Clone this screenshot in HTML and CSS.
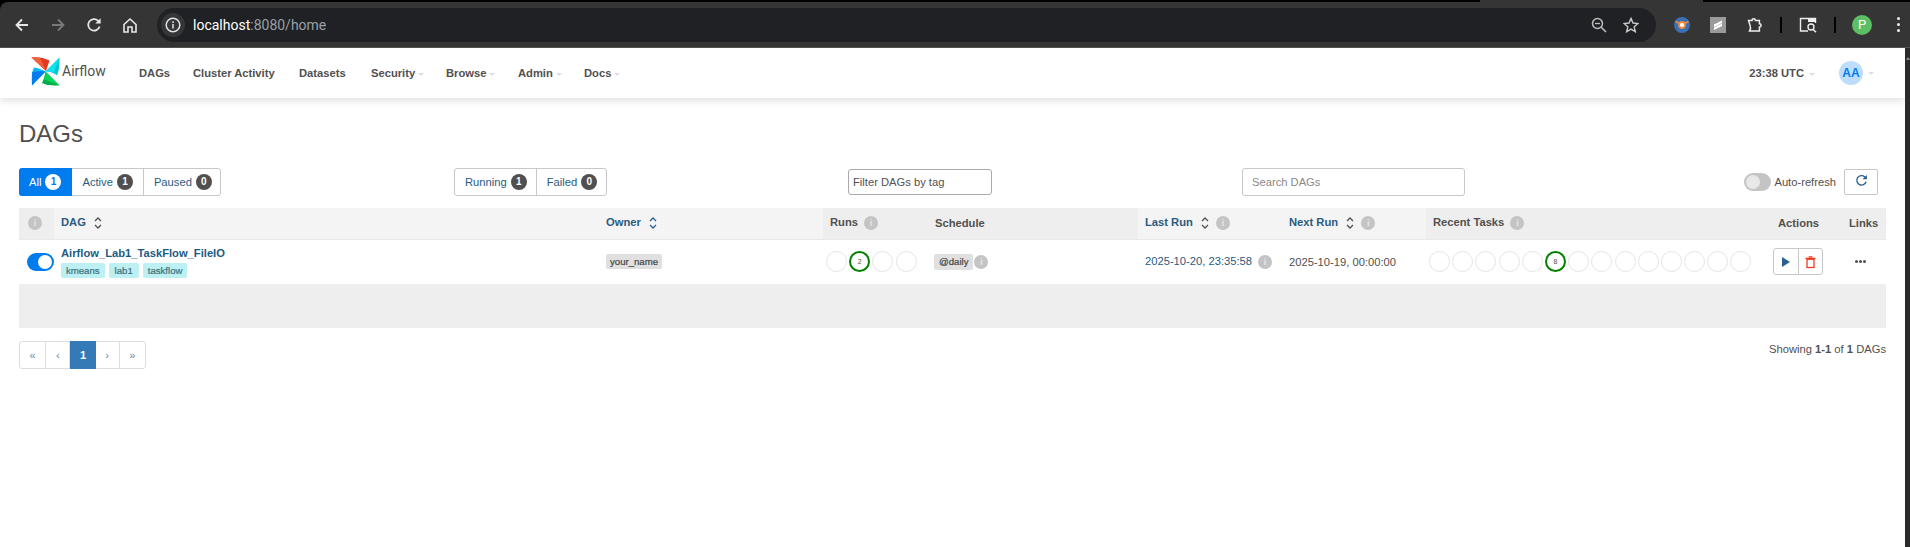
FILE: index.html
```html
<!DOCTYPE html>
<html lang="en">
<head>
    <meta charset="UTF-8">
    <meta name="viewport" content="width=device-width, initial-scale=1.0">
    <title>DAGs - Airflow</title>
    <link rel="stylesheet" href="styles.css">
</head>
<body>
    <!-- browser toolbar -->
    <div class="tab-strip"><span class="tab-edge"></span></div>
    <div class="browser-bar">
        <div class="browser-nav">
            <svg class="b-icon" viewBox="0 0 16 16"><path d="M14 8H3M8 2.500 2.500 8 8 13.500" fill="none" stroke="#e8e8e8" stroke-width="1.800"/></svg>
            <svg class="b-icon" viewBox="0 0 16 16"><path d="M2 8h11M8 2.500 13.500 8 8 13.500" fill="none" stroke="#7a7a7a" stroke-width="1.800"/></svg>
            <svg class="b-icon" viewBox="0 0 16 16"><path d="M13.600 9.500A5.800 5.800 0 1 1 12 3.600L14 5.600" fill="none" stroke="#e8e8e8" stroke-width="1.700"/><path d="M14.600 1.200v5.400H9.200z" fill="#e8e8e8"/></svg>
            <svg class="b-icon" viewBox="0 0 16 16"><path d="M2 7.500 8 2l6 5.500V15h-4V10H6v5H2z" fill="none" stroke="#e8e8e8" stroke-width="1.600"/></svg>
        </div>
        <div class="address">
            <span class="site-chip"><svg viewBox="0 0 16 16" width="16" height="16"><circle cx="8" cy="8" r="6.800" fill="none" stroke="#e3e3e3" stroke-width="1.500"/><path d="M8 7v4.500M8 4.300v1.600" stroke="#e3e3e3" stroke-width="1.500"/></svg></span>
            <span class="url">localhost<span class="url-dim">:8080/home</span></span>
            <svg class="addr-zoom" viewBox="0 0 16 16"><circle cx="6.500" cy="6.500" r="5" fill="none" stroke="#bdbdbd" stroke-width="1.500"/><path d="M10.200 10.200 15 15" stroke="#bdbdbd" stroke-width="1.600"/><path d="M4 6.500h5" stroke="#bdbdbd" stroke-width="1.300"/></svg>
            <svg class="addr-star" viewBox="0 0 16 16"><path d="M8 1.400 10 6l5 .5-3.800 3.300 1.100 4.900L8 12.100 3.700 14.700l1.100-4.900L1 6.500 6 6z" fill="none" stroke="#c8c8c8" stroke-width="1.400"/></svg>
        </div>
        <div class="browser-tools">
            <svg class="ext-one" viewBox="0 0 16 16"><circle cx="8" cy="8" r="8" fill="#3a6fb5"/><path d="M1.500 4.500 5.500 6.500h5l4-2" fill="none" stroke="#f08a3c" stroke-width="1.600"/><circle cx="8" cy="8" r="3" fill="#fff" stroke="#f08a3c" stroke-width="1.800"/></svg>
            <svg class="ext-two" viewBox="0 0 16 16"><rect width="16" height="16" fill="#9a9a9a"/><path d="M4 7.500 12 3.500v2.500L4 10zM4 10.500l8-4v2.500l-8 4z" fill="#fff"/></svg>
            <svg class="ext-puzzle" viewBox="0 0 16 16"><path d="M1.500 3.500H5a1.700 1.700 0 0 1 3.400 0h4v3.200a1.700 1.700 0 0 1 0 3.400v3.900H2.600a6 6 0 0 0 .6-5.200z" fill="none" stroke="#eee" stroke-width="1.500"/></svg>
            <span class="tool-sep"></span>
            <svg class="tab-search" viewBox="0 0 18 16"><path d="M9 14H1.500V1.500H16.500V6" fill="none" stroke="#eee" stroke-width="1.400"/><rect x="9" y="1" width="8" height="4" fill="#eee"/><circle cx="12" cy="10" r="3" fill="none" stroke="#eee" stroke-width="1.400"/><path d="M14 12.200l3 3" stroke="#eee" stroke-width="1.500"/></svg>
            <span class="tool-sep sep-two"></span>
            <span class="profile">P</span>
            <span class="kebab"><i></i><i></i><i></i></span>
        </div>
    </div>

    <div class="window">
        <div class="page">
            <nav class="navbar">
                <a class="brand">
                    <svg class="logo" viewBox="0 0 29 29">
                        <path d="M.5 .5C6 -.5 13 .5 18.500 3.500L15 14z" fill="#e43921"/>
                        <path d="M.5 .5 15 14 9.500 1.200C6 .3 3 .2 .5 .5z" fill="#f0603a"/>
                        <path d="M28.500 .5C28.500 7 28.500 13 26 18.500 22 15 18 14.500 14.500 14.500z" fill="#00c7d4"/>
                        <path d="M28.500 .5 14.500 14.500C17 14.500 20 14.800 22.500 16z" fill="#11e1ee"/>
                        <path d="M28.500 28.500C21 28.500 16 28.500 11 26 13 22 14 18 14.500 14.500z" fill="#00ad46"/>
                        <path d="M28.500 28.500 14.500 14.500C14.500 17 14 20 13 22.500z" fill="#04d659"/>
                        <path d="M1 28.500C.5 21 .5 15 3 10.500 7 11 11 12.500 14.500 14.500z" fill="#0cb6ff"/>
                        <path d="M1 28.500 14.500 14.500C11 14 5 14 1.200 15z" fill="#017cee"/>
                    </svg>
                    <span class="brand-name">Airflow</span>
                </a>
                <ul class="nav-links">
                    <li>DAGs</li>
                    <li>Cluster Activity</li>
                    <li>Datasets</li>
                    <li class="has-caret">Security</li>
                    <li class="has-caret">Browse</li>
                    <li class="has-caret">Admin</li>
                    <li class="has-caret">Docs</li>
                </ul>
                <div class="nav-right">
                    <span class="clock has-caret">23:38 UTC</span>
                    <span class="user has-caret"><span class="avatar">AA</span></span>
                </div>
            </nav>

            <main class="content">
                <h2 class="page-title">DAGs</h2>

                <div class="filters">
                    <div class="btn-group status-group">
                        <a class="btn active">All <span class="count">1</span></a>
                        <a class="btn">Active <span class="count">1</span></a>
                        <a class="btn">Paused <span class="count">0</span></a>
                    </div>
                    <div class="btn-group state-group">
                        <a class="btn">Running <span class="count">1</span></a>
                        <a class="btn">Failed <span class="count">0</span></a>
                    </div>
                    <input class="tag-filter" type="text" placeholder="Filter DAGs by tag">
                    <input class="dag-search" type="text" placeholder="Search DAGs">
                    <div class="refresh">
                        <span class="refresh-toggle"></span>
                        <span class="refresh-label">Auto-refresh</span>
                        <button class="refresh-btn" type="button">
                            <svg viewBox="0 0 16 16" width="13" height="13"><path d="M13.600 9.500A5.800 5.800 0 1 1 12 3.600L14 5.600" fill="none" stroke="#2a6190" stroke-width="1.700"/><path d="M14.600 1.200v5.400H9.200z" fill="#2a6190"/></svg>
                        </button>
                    </div>
                </div>

                <table class="dag-table">
                    <thead>
                        <tr>
                            <th class="col-info shaded"><span class="info"></span></th>
                            <th class="col-dag link-head">DAG <svg class="sort" viewBox="0 0 10 14"><path d="M2 5 5 2l3 3M2 9l3 3 3-3" fill="none" stroke="#51504f" stroke-width="1.300"/></svg></th>
                            <th class="col-owner">Owner <svg class="sort" viewBox="0 0 10 14"><path d="M2 5 5 2l3 3M2 9l3 3 3-3" fill="none" stroke="#2a6190" stroke-width="1.300"/></svg></th>
                            <th class="col-runs shaded plain-head">Runs <span class="info"></span></th>
                            <th class="col-schedule shaded plain-head">Schedule</th>
                            <th class="col-last link-head">Last Run <svg class="sort" viewBox="0 0 10 14"><path d="M2 5 5 2l3 3M2 9l3 3 3-3" fill="none" stroke="#51504f" stroke-width="1.300"/></svg> <span class="info"></span></th>
                            <th class="col-next link-head">Next Run <svg class="sort" viewBox="0 0 10 14"><path d="M2 5 5 2l3 3M2 9l3 3 3-3" fill="none" stroke="#51504f" stroke-width="1.300"/></svg> <span class="info"></span></th>
                            <th class="col-tasks shaded plain-head">Recent Tasks <span class="info"></span></th>
                            <th class="col-actions shaded plain-head">Actions</th>
                            <th class="col-links shaded plain-head">Links</th>
                        </tr>
                    </thead>
                    <tbody>
                        <tr class="dag-row">
                            <td class="toggle-cell"><span class="dag-toggle"></span></td>
                            <td>
                                <a class="dag-name">Airflow_Lab1_TaskFlow_FileIO</a>
                                <div class="tags">
                                    <span class="tag">kmeans</span>
                                    <span class="tag">lab1</span>
                                    <span class="tag">taskflow</span>
                                </div>
                            </td>
                            <td><span class="chip">your_name</span></td>
                            <td>
                                <div class="circles">
                                    <span class="circle"></span>
                                    <span class="circle on">2</span>
                                    <span class="circle"></span>
                                    <span class="circle"></span>
                                </div>
                            </td>
                            <td class="schedule-cell"><span class="chip chip-big">@daily</span><span class="info"></span></td>
                            <td><a class="run-link">2025-10-20, 23:35:58</a> <span class="info"></span></td>
                            <td class="next-run">2025-10-19, 00:00:00</td>
                            <td>
                                <div class="circles">
                                    <span class="circle"></span>
                                    <span class="circle"></span>
                                    <span class="circle"></span>
                                    <span class="circle"></span>
                                    <span class="circle"></span>
                                    <span class="circle on">8</span>
                                    <span class="circle"></span>
                                    <span class="circle"></span>
                                    <span class="circle"></span>
                                    <span class="circle"></span>
                                    <span class="circle"></span>
                                    <span class="circle"></span>
                                    <span class="circle"></span>
                                    <span class="circle"></span>
                                </div>
                            </td>
                            <td>
                                <div class="action-btns">
                                    <span class="action"><svg viewBox="0 0 12 14" width="12" height="14"><path d="M2 2v10l8-5z" fill="#2a6190"/></svg></span>
                                    <span class="action"><svg viewBox="0 0 12 14" width="11" height="14"><path d="M4 1.500h4M.5 3h11" stroke="#f1391c" stroke-width="1.300"/><rect x="2.200" y="4" width="7.600" height="9" fill="none" stroke="#f1391c" stroke-width="1.400"/></svg></span>
                                </div>
                            </td>
                            <td class="links-cell"><span class="dots"><i></i><i></i><i></i></span></td>
                        </tr>
                        <tr class="empty-row"><td colspan="10"></td></tr>
                    </tbody>
                </table>

                <div class="table-foot">
                    <ul class="pager">
                        <li>«</li>
                        <li>‹</li>
                        <li class="current">1</li>
                        <li>›</li>
                        <li>»</li>
                    </ul>
                    <p class="showing">Showing <b>1-1</b> of <b>1</b> DAGs</p>
                </div>
            </main>
        </div>
        <div class="scrollbar"></div>
    </div>
</body>
</html>
```

FILE: styles.css
```css
* {
    box-sizing: border-box;
}
html, body {
    margin: 0;
    height: 547px;
    overflow: hidden;
}
body {
    font-family: "Liberation Sans", Arial, sans-serif;
    font-size: 11.2px;
    color: #51504f;
    background-color: #000;
}

/* browser toolbar */
.tab-strip {
    height: 2px;
    display: flex;
    background-color: #000;
}
.tab-edge {
    width: 223px;
    margin-left: 1480px;
    background-color: #353535;
}
.browser-bar {
    height: 46px;
    display: flex;
    align-items: center;
    background-color: #353535;
    border-bottom: 1px solid #555;
    border-top-left-radius: 8px;
}
.browser-nav {
    display: flex;
    gap: 20px;
    width: 157px;
    padding-left: 14px;
}
.b-icon {
    width: 16px;
    height: 16px;
}
.address {
    width: 1499px;
    height: 34px;
    display: flex;
    align-items: center;
    background-color: #202124;
    border-radius: 17px;
    padding: 0 10px 0 4px;
}
.site-chip {
    width: 24px;
    height: 24px;
    border-radius: 50%;
    background-color: #353638;
    display: flex;
    align-items: center;
    justify-content: center;
}
.url {
    margin-left: 8px;
    flex: 1;
    font-family: Roboto, sans-serif;
    font-size: 14px;
    color: #fff;
}
.url-dim {
    color: #9aa0a6;
}
.addr-zoom {
    width: 16px;
    height: 16px;
    margin-right: 16px;
}
.addr-star {
    width: 16px;
    height: 16px;
    margin-right: 7px;
}
.browser-tools {
    flex: 1;
    display: flex;
    align-items: center;
    padding-left: 18px;
}
.ext-one, .ext-two {
    width: 16px;
    height: 16px;
}
.ext-two {
    margin-left: 20px;
}
.ext-puzzle {
    width: 16px;
    height: 16px;
    margin-left: 21px;
}
.tool-sep {
    width: 2px;
    height: 16px;
    background-color: #000;
    margin-left: 17px;
}
.tab-search {
    width: 18px;
    height: 16px;
    margin-left: 17px;
}
.sep-two {
    margin-left: 17px;
}
.profile {
    width: 20px;
    height: 20px;
    margin-left: 16px;
    border-radius: 50%;
    background-color: #5cbf63;
    color: #fff;
    font-family: Roboto, sans-serif;
    font-size: 13px;
    line-height: 20px;
    text-align: center;
}
.kebab {
    display: flex;
    flex-direction: column;
    gap: 3px;
    margin-left: 25px;
}
.kebab i {
    width: 3px;
    height: 3px;
    border-radius: 50%;
    background-color: #eee;
}

.window {
    display: flex;
    height: 499px;
}
.page {
    flex: 1;
    min-width: 0;
    background-color: #fff;
}
.scrollbar {
    width: 5px;
    display: flex;
    justify-content: center;
    background-color: #2b2b2b;
}
.scrollbar::before {
    content: "";
    height: 0;
    margin-top: 9px;
    border-left: 2px solid transparent;
    border-right: 2px solid transparent;
    border-bottom: 3px solid #8a8a8a;
}

/* navbar */
.navbar {
    height: 50px;
    display: flex;
    align-items: center;
    padding: 0 31px;
    box-shadow: 0 2px 8px rgba(0,0,0,0.14);
}
.brand {
    display: flex;
    align-items: center;
    width: 108px;
    margin-bottom: 3px;
}
.logo {
    width: 29px;
    height: 29px;
}
.brand-name {
    margin-left: 2px;
    margin-bottom: 1px;
    font-family: Roboto, sans-serif;
    font-size: 14px;
    color: #51504f;
}
.nav-links {
    display: flex;
    list-style: none;
    margin: 0;
    padding: 0;
    font-weight: bold;
    flex: 1;
}
.nav-links li:nth-child(1) { width: 54px; }
.nav-links li:nth-child(2) { width: 106px; }
.nav-links li:nth-child(3) { width: 72px; }
.nav-links li:nth-child(4) { width: 75px; }
.nav-links li:nth-child(5) { width: 72px; }
.nav-links li:nth-child(6) { width: 66px; }
.has-caret::after {
    content: "";
    display: inline-block;
    margin-left: 3px;
    vertical-align: middle;
    border-left: 3px solid transparent;
    border-right: 3px solid transparent;
    border-top: 3px solid #e6d8e6;
}
.nav-right {
    display: flex;
    align-items: center;
    font-weight: bold;
}
.clock::after {
    margin-left: 5px;
}
.user {
    margin-left: 24px;
    display: flex;
    align-items: center;
}
.user::after {
    margin-left: 5px;
}
.avatar {
    width: 24px;
    height: 24px;
    border-radius: 50%;
    background-color: #bedcfb;
    color: #017cee;
    font-size: 12px;
    line-height: 24px;
    text-align: center;
}

/* page content */
.content {
    padding: 0 19px;
}
.page-title {
    margin: 0;
    padding-top: 21px;
    font-size: 24px;
    line-height: 30px;
    font-weight: normal;
    height: 70px;
}
.filters {
    display: flex;
    align-items: center;
    height: 28px;
}
.btn-group {
    display: flex;
    height: 28px;
    border: 1px solid #c8c8c8;
    border-radius: 3px;
}
.status-group {
    width: 202px;
}
.state-group {
    width: 153px;
    margin-left: 233px;
}
.btn {
    display: flex;
    align-items: center;
    gap: 4px;
    padding: 0 10px;
    color: #2a5b80;
    border-right: 1px solid #c8c8c8;
}
.btn:last-child {
    border-right: none;
}
.btn.active {
    margin: -1px 0 -1px -1px;
    padding-right: 11px;
    background-color: #017cee;
    color: #fff;
    border-radius: 3px 0 0 3px;
    border-right: none;
}
.state-group .btn:first-child {
    padding-right: 9px;
}
.state-group .btn:last-child {
    padding-right: 12px;
}
.count {
    display: inline-block;
    width: 16px;
    height: 16px;
    border-radius: 50%;
    background-color: #51504f;
    color: #fff;
    font-size: 10px;
    font-weight: bold;
    line-height: 16px;
    text-align: center;
}
.btn.active .count {
    background-color: #fff;
    color: #017cee;
}
input {
    font-family: inherit;
    font-size: 11.2px;
    border-radius: 3px;
}
.tag-filter {
    width: 144px;
    height: 26px;
    margin-left: 241px;
    padding: 0 4px;
    border: 1px solid #aaa;
}
.tag-filter::placeholder {
    color: #51504f;
}
.dag-search {
    width: 223px;
    height: 28px;
    margin-left: 250px;
    border: 1px solid #c8c8c8;
    padding: 0 9px;
}
.dag-search::placeholder {
    color: #888;
}
.refresh {
    margin-left: auto;
    display: flex;
    align-items: center;
}
.refresh-toggle {
    position: relative;
    width: 27px;
    height: 18px;
    border-radius: 9px;
    background-color: #c4c4c4;
}
.refresh-toggle::after {
    content: "";
    position: absolute;
    left: 2px;
    top: 2px;
    width: 14px;
    height: 14px;
    border-radius: 50%;
    background-color: #e8e8e8;
}
.refresh-label {
    margin-left: 3px;
}
.refresh-btn {
    width: 34px;
    height: 26px;
    margin-left: 8px;
    margin-right: 8px;
    padding: 0;
    background: #fff;
    border: 1px solid #c8c8c8;
    border-radius: 2px;
}

/* table */
.dag-table {
    width: 1867px;
    margin-top: 12px;
    table-layout: fixed;
    border-collapse: collapse;
    background-color: #eee;
}
.dag-table th {
    height: 31px;
    padding: 0 7px;
    text-align: left;
    background-color: #f4f4f4;
    border-bottom: 1px solid #e8e8e8;
    white-space: nowrap;
}
.dag-table th.shaded {
    background-color: #eee;
}
.link-head, .col-owner {
    color: #2a5b80;
}
.col-info { width: 35px; }
.col-dag { width: 545px; }
.col-owner { width: 224px; }
.col-runs { width: 105px; }
.col-schedule { width: 210px; }
.col-last { width: 144px; }
.col-next { width: 144px; }
.col-tasks { width: 345px; }
.col-actions { width: 71px; }
.col-links { width: 44px; }
.dag-table th.col-info {
    padding-left: 9px;
}
.info {
    display: inline-block;
    position: relative;
    width: 14px;
    height: 14px;
    margin-left: 3px;
    border-radius: 50%;
    background-color: #c4c4c4;
    vertical-align: middle;
}
.col-info .info {
    margin-left: 0;
}
.info::after {
    content: "i";
    position: absolute;
    left: 0;
    right: 0;
    top: 0;
    color: #e8e8e8;
    font-size: 9px;
    font-weight: bold;
    line-height: 14px;
    text-align: center;
}
.sort {
    width: 10px;
    height: 14px;
    margin-left: 4px;
    vertical-align: middle;
}
.dag-row td {
    height: 45px;
    padding: 0 7px;
    background-color: #fff;
    white-space: nowrap;
}
.dag-row td.toggle-cell {
    padding: 0 0 0 8px;
}
.dag-toggle {
    display: block;
    position: relative;
    width: 27px;
    height: 18px;
    border-radius: 9px;
    background-color: #017cee;
}
.dag-toggle::after {
    content: "";
    position: absolute;
    right: 2px;
    top: 2px;
    width: 14px;
    height: 14px;
    border-radius: 50%;
    background-color: #fff;
}
.dag-name {
    display: block;
    color: #1d5a83;
    font-weight: bold;
    line-height: 14px;
    margin-top: 1px;
}
.tags {
    display: flex;
    gap: 4px;
    margin-top: 3px;
}
.tag {
    height: 15px;
    padding: 0 5px;
    border-radius: 2px;
    background-color: #bdf0f2;
    color: #3c6f7a;
    font-size: 9.6px;
    line-height: 15px;
    -webkit-text-stroke: 0.2px;
}
.tag:nth-child(2) {
    padding: 0 6px;
}
.chip {
    display: inline-block;
    height: 15px;
    padding: 0 4px;
    border-radius: 2px;
    background-color: #e0e0e0;
    color: #444;
    font-size: 9.6px;
    line-height: 15px;
    vertical-align: middle;
    -webkit-text-stroke: 0.2px;
}
.chip-big {
    height: 16px;
    margin-left: -1px;
    padding: 0 5px;
    line-height: 16px;
}
.schedule-cell .info {
    margin-left: 1px;
}
.circles {
    display: flex;
    gap: 2.2px;
    margin-left: -4px;
}
.circle {
    width: 21px;
    height: 21px;
    flex: none;
    border: 1px solid #e4e4e4;
    border-radius: 50%;
    font-size: 7px;
    line-height: 17px;
    text-align: center;
    color: #51504f;
}
.circle.on {
    border: 2px solid #008000;
}
.run-link {
    color: #2a5b80;
}
.action-btns {
    display: flex;
    width: 50px;
    height: 27px;
    margin-left: -5px;
    border: 1px solid #c8c8c8;
    border-radius: 3px;
}
.action {
    flex: 1;
    display: flex;
    align-items: center;
    justify-content: center;
}
.action:first-child {
    border-right: 1px solid #c8c8c8;
}
.dots {
    display: flex;
    gap: 1px;
    margin-left: 6px;
}
.dots i {
    width: 3px;
    height: 3px;
    border-radius: 50%;
    background-color: #51504f;
}
.empty-row td {
    height: 44px;
    border: none;
}

/* pagination */
.table-foot {
    display: flex;
    justify-content: space-between;
    margin-top: 13px;
}
.pager {
    display: flex;
    list-style: none;
    margin: 0;
    padding: 0;
    height: 28px;
    border: 1px solid #ddd;
    border-radius: 3px;
}
.pager li {
    padding: 0 9.6px;
    line-height: 26px;
    text-align: center;
    color: #6c8aa3;
    border-right: 1px solid #ddd;
}
.pager li:last-child {
    border-right: none;
}
.pager li.current {
    margin: -1px 0;
    height: 28px;
    line-height: 28px;
    background-color: #337ab7;
    color: #fff;
    font-weight: bold;
    border-right: none;
}
.showing {
    margin: 2px 0 0;
}
```
